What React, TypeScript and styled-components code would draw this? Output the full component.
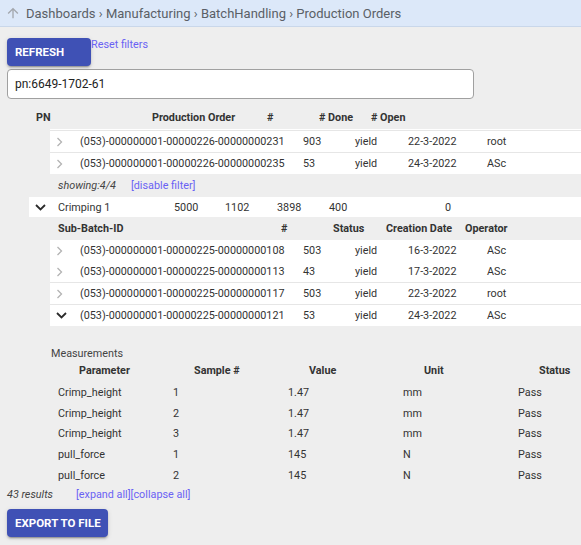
import styled, { createGlobalStyle } from 'styled-components'

const linkColor = '#6a62f4'
const textColor = '#333333'
const dividerColor = '#e6e6e6'
const buttonColor = '#3f51b5'

const GlobalStyle = createGlobalStyle`
  body {
    margin: 0;
    background: #eeeeee;
    font-family: Roboto, 'Liberation Sans', sans-serif;
    color: ${textColor};
    overflow: hidden;
  }
`

const Breadcrumb = styled.nav`
  height: 27px;
  box-sizing: border-box;
  display: flex;
  align-items: center;
  gap: 5px;
  padding-left: 5px;
  background: #dce8f9;
  border-bottom: 1px solid #c9d7ea;
  font-size: 13px;
  color: #5a5f66;
  svg {
    flex-shrink: 0;
  }
`

const Content = styled.main`
  padding: 11px 0 8px 7px;
`

const Toolbar = styled.div`
  display: flex;
  align-items: flex-start;
`

const ActionButton = styled.button`
  min-width: 84px;
  height: 28px;
  padding: 0 7px 0 8px;
  border: none;
  border-radius: 4px;
  background: ${buttonColor};
  color: #fff;
  font-family: Roboto, 'Liberation Sans', sans-serif;
  font-size: 11.5px;
  font-weight: 700;
  text-align: left;
  text-transform: uppercase;
  box-shadow: 0 3px 1px -2px rgba(0, 0, 0, 0.2), 0 2px 2px 0 rgba(0, 0, 0, 0.14),
    0 1px 5px 0 rgba(0, 0, 0, 0.12);
  cursor: pointer;
`

const TextLink = styled.a`
  color: ${linkColor};
  font-size: 10.8px;
  line-height: 13px;
  cursor: pointer;
`

const SearchInput = styled.input`
  display: block;
  width: 467px;
  height: 30px;
  box-sizing: border-box;
  margin-top: 3px;
  padding: 0 7px;
  border: 1px solid #a0a0a0;
  border-radius: 4px;
  background: #fff;
  font-family: Roboto, 'Liberation Sans', sans-serif;
  font-size: 12px;
  color: #222;
  outline: none;
`

const HeaderRow = styled.div<{ $cols: string; $indent: number; $height: number; $gap?: number }>`
  display: grid;
  grid-template-columns: ${(p) => p.$cols};
  align-items: center;
  height: ${(p) => p.$height}px;
  margin-top: ${(p) => p.$gap || 0}px;
  margin-left: ${(p) => p.$indent}px;
  font-size: 10.8px;
  font-weight: 700;
  color: ${textColor};
`

const Block = styled.div<{ $indent: number; $padTop?: number; $gap?: number }>`
  margin-top: ${(p) => p.$gap || 0}px;
  margin-left: ${(p) => p.$indent}px;
  padding-top: ${(p) => p.$padTop || 0}px;
  background: #fff;
`

const DataRow = styled.div<{ $plain?: boolean }>`
  display: grid;
  grid-template-columns: 24px 223px 52px 53px 79px auto;
  align-items: center;
  height: 21px;
  padding-left: 6px;
  border-top: ${(p) => (p.$plain ? 'none' : `1px solid ${dividerColor}`)};
  font-size: 10.8px;
  white-space: nowrap;
`

const GroupRow = styled.div`
  display: grid;
  grid-template-columns: 23px 116px 51px 52px 52px 116px auto;
  align-items: center;
  height: 20px;
  margin-left: 22px;
  padding-left: 6px;
  background: #fff;
  font-size: 10.8px;
`

const FilterInfo = styled.div`
  display: flex;
  align-items: center;
  gap: 15px;
  height: 23px;
  margin-left: 51px;
  font-size: 10.8px;
`

const Muted = styled.span`
  font-style: italic;
  color: #444;
`

const Measurements = styled.section`
  margin: 20px 0 0 43px;
`

const SectionLabel = styled.div`
  height: 16px;
  padding-left: 1px;
  font-size: 10.8px;
  line-height: 16px;
  color: #444;
`

const MeasureGrid = styled.div`
  display: grid;
  grid-template-columns: 115px 115px 115px 115px auto;
  grid-template-rows: 20px;
  grid-auto-rows: 20.75px;
  align-items: center;
  font-size: 10.8px;
  white-space: nowrap;
`

const MeasureHead = styled.div`
  padding-left: 29px;
  font-weight: 700;
  align-self: start;
  line-height: 18px;
`

const MeasureCell = styled.div`
  padding-left: 8px;
`

const Footer = styled.div`
  display: flex;
  align-items: center;
  gap: 23px;
  height: 18px;
  font-size: 10.8px;
`

const ExportButton = styled(ActionButton)`
  margin-top: 5px;
`

const ArrowUp = () => (
  <svg width="16" height="16" viewBox="0 0 24 24">
    <path
      fill="#a3a7ad"
      d="M4 12l1.41 1.41L11 7.83V20h2V7.83l5.58 5.59L20 12l-8-8-8 8z"
    />
  </svg>
)

const ChevronRight = () => (
  <svg width="8" height="10" viewBox="0 0 8 10">
    <path d="M1.5 1 L5.5 5 L1.5 9" fill="none" stroke="#b3b3b3" strokeWidth="1.3" />
  </svg>
)

const ChevronDown = () => (
  <svg width="11" height="7" viewBox="0 0 11 7">
    <path d="M1 1 L5.5 5.5 L10 1" fill="none" stroke="#2b2b2b" strokeWidth="1.8" />
  </svg>
)

const orders = [
  { id: '(053)-000000001-00000226-00000000231', count: 903, status: 'yield', date: '22-3-2022', op: 'root' },
  { id: '(053)-000000001-00000226-00000000235', count: 53, status: 'yield', date: '24-3-2022', op: 'ASc' },
]

const subBatches = [
  { id: '(053)-000000001-00000225-00000000108', count: 503, status: 'yield', date: '16-3-2022', op: 'ASc', plain: true },
  { id: '(053)-000000001-00000225-00000000113', count: 43, status: 'yield', date: '17-3-2022', op: 'ASc', plain: true },
  { id: '(053)-000000001-00000225-00000000117', count: 503, status: 'yield', date: '22-3-2022', op: 'root' },
  { id: '(053)-000000001-00000225-00000000121', count: 53, status: 'yield', date: '24-3-2022', op: 'ASc', open: true },
]

const measurements = [
  ['Crimp_height', '1', '1.47', 'mm', 'Pass'],
  ['Crimp_height', '2', '1.47', 'mm', 'Pass'],
  ['Crimp_height', '3', '1.47', 'mm', 'Pass'],
  ['pull_force', '1', '145', 'N', 'Pass'],
  ['pull_force', '2', '145', 'N', 'Pass'],
]

const BatchRow = ({ row, plain = false, open = false }) => (
  <DataRow $plain={plain}>
    {open ? <ChevronDown /> : <ChevronRight />}
    <span>{row.id}</span>
    <span>{row.count}</span>
    <span>{row.status}</span>
    <span>{row.date}</span>
    <span>{row.op}</span>
  </DataRow>
)

export default function App() {
  return (
    <>
      <GlobalStyle />
      <Breadcrumb>
        <ArrowUp />
        <span>Dashboards › Manufacturing › BatchHandling › Production Orders</span>
      </Breadcrumb>
      <Content>
        <Toolbar>
          <ActionButton>Refresh</ActionButton>
          <TextLink>Reset filters</TextLink>
        </Toolbar>
        <SearchInput defaultValue="pn:6649-1702-61" />

        <HeaderRow $cols="116px 115px 52px 52px auto" $indent={29} $height={20} $gap={8}>
          <span>PN</span>
          <span>Production Order</span>
          <span>#</span>
          <span># Done</span>
          <span># Open</span>
        </HeaderRow>
        <Block $indent={43} $padTop={1} $gap={2}>
          {orders.map((row) => (
            <BatchRow key={row.id} row={row} />
          ))}
        </Block>
        <FilterInfo>
          <Muted>showing:4/4</Muted>
          <TextLink>[disable filter]</TextLink>
        </FilterInfo>

        <GroupRow>
          <ChevronDown />
          <span>Crimping 1</span>
          <span>5000</span>
          <span>1102</span>
          <span>3898</span>
          <span>400</span>
          <span>0</span>
        </GroupRow>
        <HeaderRow $cols="223px 52px 53px 79px auto" $indent={51} $height={23}>
          <span>Sub-Batch-ID</span>
          <span>#</span>
          <span>Status</span>
          <span>Creation Date</span>
          <span>Operator</span>
        </HeaderRow>
        <Block $indent={43}>
          {subBatches.map((row) => (
            <BatchRow key={row.id} row={row} plain={row.plain} open={row.open} />
          ))}
        </Block>

        <Measurements>
          <SectionLabel>Measurements</SectionLabel>
          <MeasureGrid>
            <MeasureHead>Parameter</MeasureHead>
            <MeasureHead>Sample #</MeasureHead>
            <MeasureHead>Value</MeasureHead>
            <MeasureHead>Unit</MeasureHead>
            <MeasureHead>Status</MeasureHead>
            {measurements.map((m, i) =>
              m.map((value, j) => <MeasureCell key={`${i}-${j}`}>{value}</MeasureCell>)
            )}
          </MeasureGrid>
        </Measurements>

        <Footer>
          <Muted>43 results</Muted>
          <span>
            <TextLink>[expand all]</TextLink>
            <TextLink>[collapse all]</TextLink>
          </span>
        </Footer>
        <ExportButton>Export to file</ExportButton>
      </Content>
    </>
  )
}
